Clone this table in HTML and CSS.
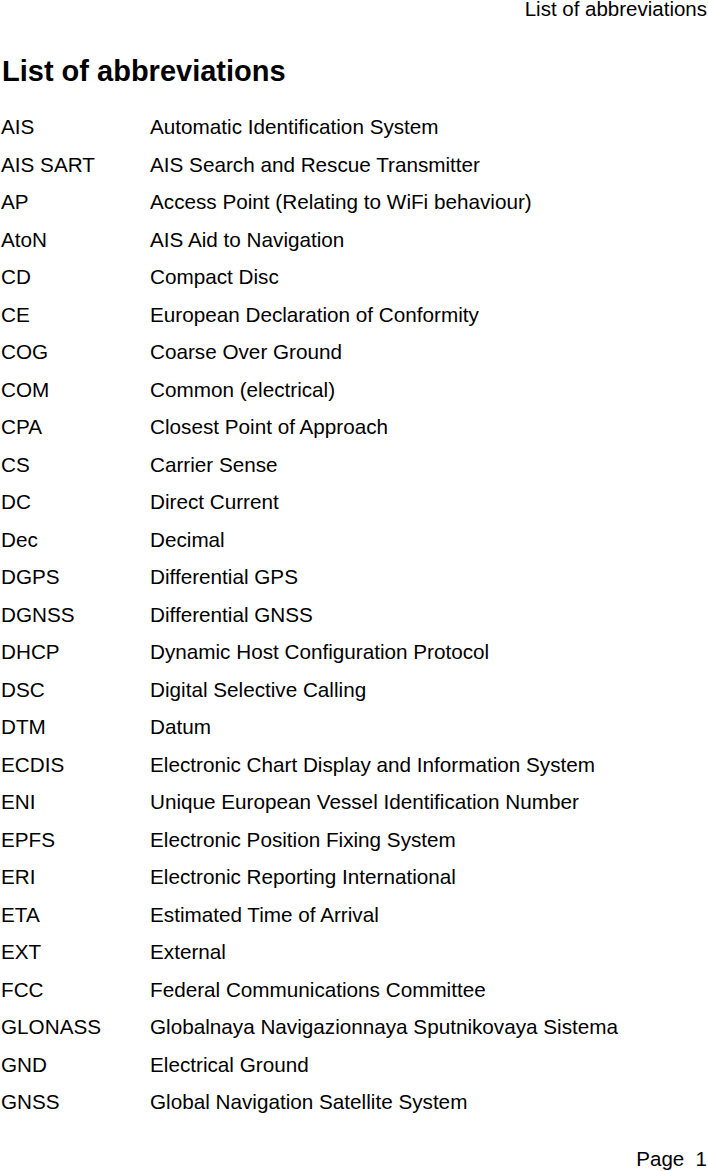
FILE: index.html
```html
<!DOCTYPE html>
<html>
<head>
<meta charset="utf-8">
<link rel="stylesheet" href="styles.css">
</head>
<body>
<div class="page">
  <div class="running-head">List of abbreviations</div>
  <h1 class="title">List of abbreviations</h1>
  <div class="list">
    <div class="row"><span class="abbr">AIS</span><span class="desc">Automatic Identification System</span></div>
    <div class="row"><span class="abbr">AIS SART</span><span class="desc">AIS Search and Rescue Transmitter</span></div>
    <div class="row"><span class="abbr">AP</span><span class="desc">Access Point (Relating to WiFi behaviour)</span></div>
    <div class="row"><span class="abbr">AtoN</span><span class="desc">AIS Aid to Navigation</span></div>
    <div class="row"><span class="abbr">CD</span><span class="desc">Compact Disc</span></div>
    <div class="row"><span class="abbr">CE</span><span class="desc">European Declaration of Conformity</span></div>
    <div class="row"><span class="abbr">COG</span><span class="desc">Coarse Over Ground</span></div>
    <div class="row"><span class="abbr">COM</span><span class="desc">Common (electrical)</span></div>
    <div class="row"><span class="abbr">CPA</span><span class="desc">Closest Point of Approach</span></div>
    <div class="row"><span class="abbr">CS</span><span class="desc">Carrier Sense</span></div>
    <div class="row"><span class="abbr">DC</span><span class="desc">Direct Current</span></div>
    <div class="row"><span class="abbr">Dec</span><span class="desc">Decimal</span></div>
    <div class="row"><span class="abbr">DGPS</span><span class="desc">Differential GPS</span></div>
    <div class="row"><span class="abbr">DGNSS</span><span class="desc">Differential GNSS</span></div>
    <div class="row"><span class="abbr">DHCP</span><span class="desc">Dynamic Host Configuration Protocol</span></div>
    <div class="row"><span class="abbr">DSC</span><span class="desc">Digital Selective Calling</span></div>
    <div class="row"><span class="abbr">DTM</span><span class="desc">Datum</span></div>
    <div class="row"><span class="abbr">ECDIS</span><span class="desc">Electronic Chart Display and Information System</span></div>
    <div class="row"><span class="abbr">ENI</span><span class="desc">Unique European Vessel Identification Number</span></div>
    <div class="row"><span class="abbr">EPFS</span><span class="desc">Electronic Position Fixing System</span></div>
    <div class="row"><span class="abbr">ERI</span><span class="desc">Electronic Reporting International</span></div>
    <div class="row"><span class="abbr">ETA</span><span class="desc">Estimated Time of Arrival</span></div>
    <div class="row"><span class="abbr">EXT</span><span class="desc">External</span></div>
    <div class="row"><span class="abbr">FCC</span><span class="desc">Federal Communications Committee</span></div>
    <div class="row"><span class="abbr">GLONASS</span><span class="desc">Globalnaya Navigazionnaya Sputnikovaya Sistema</span></div>
    <div class="row"><span class="abbr">GND</span><span class="desc">Electrical Ground</span></div>
    <div class="row"><span class="abbr">GNSS</span><span class="desc">Global Navigation Satellite System</span></div>
  </div>
  <div class="folio">Page&nbsp; 1</div>
</div>
</body>
</html>
```
FILE: styles.css
```css
html, body {
  margin: 0;
  padding: 0;
  background: #fff;
}
.page {
  width: 708px;
  height: 1171px;
  font-family: "Liberation Sans", Arial, sans-serif;
  color: #000;
  display: flex;
  flex-direction: column;
  overflow: hidden;
}
.running-head {
  font-size: 20.5px;
  line-height: 18px;
  text-align: right;
  padding-right: 1px;
}
.title {
  margin: 38px 0 0 2px;
  font-size: 29px;
  font-weight: bold;
  line-height: 30px;
}
.list {
  margin-top: 22px;
  display: flex;
  flex-direction: column;
}
.row {
  display: flex;
  font-size: 20.7px;
  line-height: 37.5px;
  height: 37.5px;
}
.abbr {
  width: 150px;
  flex: none;
  padding-left: 1px;
  box-sizing: border-box;
}
.desc {
  flex: 1;
}
.folio {
  margin-top: auto;
  font-size: 20.5px;
  line-height: 24px;
  text-align: right;
  padding-right: 1px;
}
```
